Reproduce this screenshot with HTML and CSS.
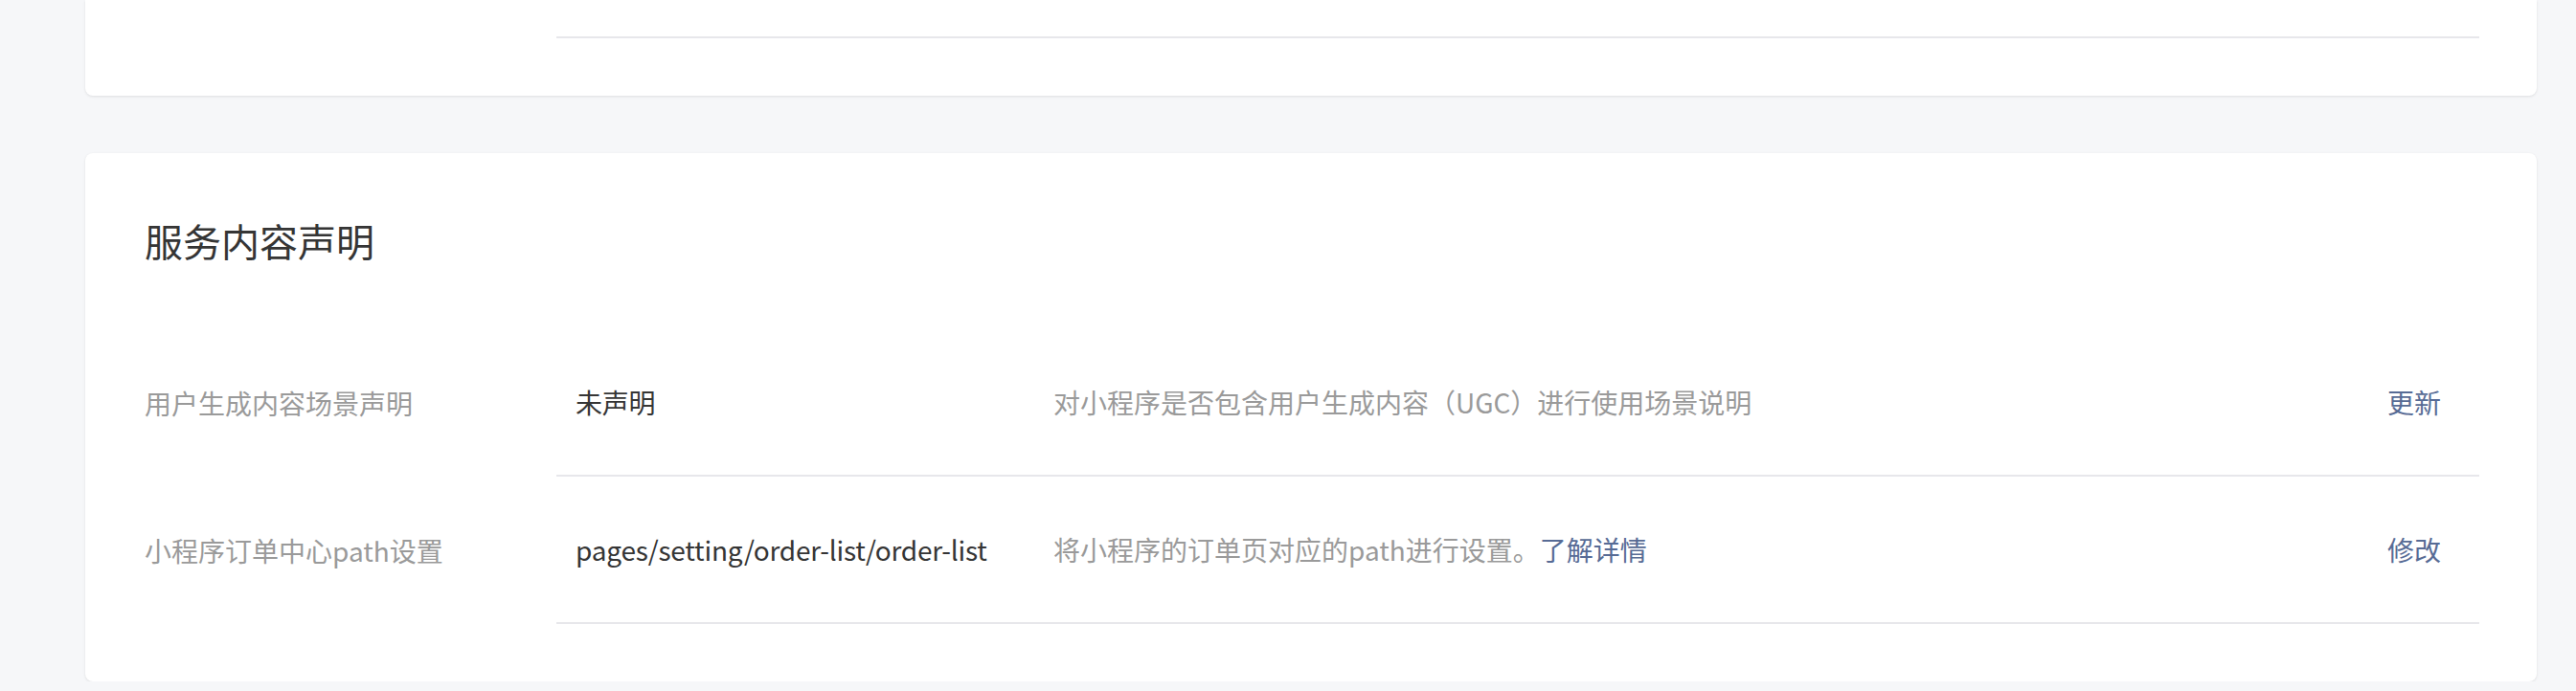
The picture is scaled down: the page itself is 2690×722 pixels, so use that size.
FILE: index.html
```html
<!DOCTYPE html>
<html lang="zh-CN">
<head>
  <meta charset="UTF-8">
  <meta name="viewport" content="width=device-width, initial-scale=1.0">
  <title>服务内容声明</title>
  <link rel="stylesheet" href="styles.css">
</head>
<body>
  <div class="page">
    <div class="card card-prev">
      <div class="row">
        <div class="row-label"></div>
        <div class="row-body row-body-empty"></div>
      </div>
    </div>

    <div class="card">
      <h2 class="card-title">服务内容声明</h2>
      <div class="row">
        <div class="row-label">用户生成内容场景声明</div>
        <div class="row-body">
          <div class="row-value">未声明</div>
          <div class="row-desc">对小程序是否包含用户生成内容（UGC）进行使用场景说明</div>
          <a class="row-action" href="#">更新</a>
        </div>
      </div>
      <div class="row">
        <div class="row-label">小程序订单中心path设置</div>
        <div class="row-body">
          <div class="row-value">pages/setting/order-list/order-list</div>
          <div class="row-desc">将小程序的订单页对应的path进行设置。<a class="link" href="#">了解详情</a></div>
          <a class="row-action" href="#">修改</a>
        </div>
      </div>
    </div>
  </div>
</body>
</html>
```

FILE: styles.css
```css
body {
  margin: 0;
  background-color: #f6f7f9;
  font-family: "Noto Sans CJK SC", "Noto Sans", sans-serif;
  color: #353535;
}
.page {
  padding: 0 41px 0 89px;
}
.card {
  background-color: #fff;
  border-radius: 8px;
  box-shadow: 0 1px 3px rgba(0, 0, 0, 0.1);
  padding: 64px 60px 60px 62px;
  margin-bottom: 60px;
}
.card:last-child {
  margin-bottom: 0;
}
.card-prev {
  padding-top: 0;
  border-radius: 0 0 8px 8px;
}
.card-title {
  margin: 0 0 66px;
  font-size: 40px;
  line-height: 54px;
  font-weight: 400;
  color: #353535;
}
.row {
  display: flex;
  align-items: stretch;
  font-size: 28px;
}
.row-label {
  width: 430px;
  flex-shrink: 0;
  color: #9a9a9a;
  display: flex;
  align-items: center;
}
.row-body {
  flex: 1;
  display: flex;
  align-items: center;
  height: 152px;
  padding: 0 40px 0 20px;
  border-bottom: 2px solid #e7e7eb;
}
.row-body-empty {
  height: 38px;
}
.row-value {
  width: 499px;
  flex-shrink: 0;
  color: #353535;
  letter-spacing: -0.2px;
}
.row-desc {
  flex: 1;
  color: #9a9a9a;
}
.link,
.row-action {
  color: #576b95;
  text-decoration: none;
}
```
